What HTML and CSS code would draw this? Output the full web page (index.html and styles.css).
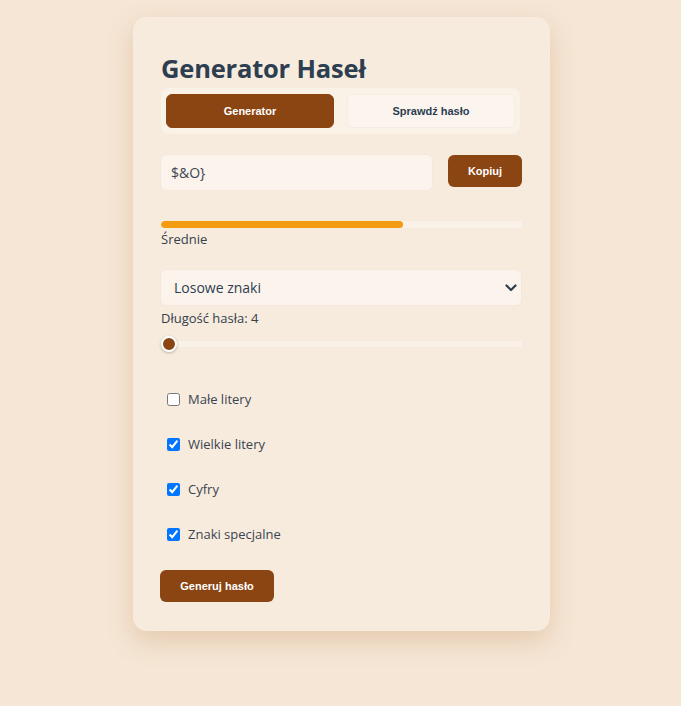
FILE: index.html
```html
<!DOCTYPE html>
<html lang="pl">
<head>
<meta charset="utf-8">
<title>Generator Haseł</title>
<link rel="stylesheet" href="styles.css">
</head>
<body>
<div class="page">
  <main class="card">
    <h1 class="title">Generator Haseł</h1>
    <div class="tabs">
      <button class="tab tab-active">Generator</button>
      <button class="tab">Sprawdź hasło</button>
    </div>
    <div class="output-row">
      <input class="output" type="text" value="$&amp;O}" readonly>
      <button class="btn btn-copy">Kopiuj</button>
    </div>
    <div class="strength">
      <div class="strength-track"><div class="strength-fill" style="width:67%"></div></div>
      <div class="strength-label">Średnie</div>
    </div>
    <div class="select-wrap">
      <select class="mode">
        <option>Losowe znaki</option>
      </select>
      <svg class="chevron" width="12" height="8" viewBox="0 0 12 8" aria-hidden="true"><path d="M1.5 1.5 L6 6 L10.5 1.5" fill="none" stroke="#2c3e50" stroke-width="2.2" stroke-linecap="round" stroke-linejoin="round"/></svg>
    </div>
    <div class="length-label">Długość hasła: 4</div>
    <input class="range" type="range" min="4" max="64" value="4">
    <div class="options">
      <label class="option"><input type="checkbox"> <span>Małe litery</span></label>
      <label class="option"><input type="checkbox" checked> <span>Wielkie litery</span></label>
      <label class="option"><input type="checkbox" checked> <span>Cyfry</span></label>
      <label class="option"><input type="checkbox" checked> <span>Znaki specjalne</span></label>
    </div>
    <div class="actions">
      <button class="btn btn-generate">Generuj hasło</button>
    </div>
  </main>
</div>
</body>
</html>
```
FILE: styles.css
```css
* { box-sizing: border-box; }
html, body { margin: 0; padding: 0; }
body {
  background: #f5e6d5;
  font-family: "Open Sans", "Noto Sans", sans-serif;
  color: #2c3e50;
}
.page {
  display: flex;
  justify-content: center;
  padding: 17px 0 40px 2px;
}
.card {
  width: 417px;
  background: #f7ebde;
  border-radius: 14px;
  padding: 28px 28px 29px 27px;
  box-shadow: 0 10px 26px rgba(185, 130, 75, 0.28);
  display: flex;
  flex-direction: column;
}
.title {
  margin: 5px 0 2px 1px;
  font-size: 25.5px;
  line-height: 36px;
  font-weight: 700;
  color: #2c3e50;
  letter-spacing: -0.2px;
}
.tabs {
  display: flex;
  gap: 13px;
  background: #faf1e7;
  border-radius: 8px;
  padding: 6px 5px 6px 5px;
  margin-left: 1px;
  width: 359px;
}
.tab {
  flex: 1;
  height: 34px;
  border: 1px solid #f7ece2;
  border-radius: 6px;
  background: #fcf5ef;
  font-family: "Liberation Sans", Arial, sans-serif;
  font-weight: 700;
  font-size: 11px;
  color: #2c3e50;
  cursor: pointer;
}
.tab-active {
  background: #8b4513;
  border-color: #8b4513;
  color: #fff;
}
.output-row {
  display: flex;
  align-items: flex-start;
  gap: 15px;
  margin-top: 20px;
}
.output {
  width: 273px;
  height: 37px;
  border: 1px solid #f4e8dc;
  border-radius: 6px;
  background: #fbf3ec;
  font-family: "Open Sans", "Noto Sans", sans-serif;
  font-size: 14px;
  color: #3c4650;
  padding: 0 10px;
  outline: none;
}
.btn {
  border: none;
  border-radius: 6px;
  background: #8b4513;
  color: #fff;
  font-family: "Liberation Sans", Arial, sans-serif;
  font-weight: 700;
  font-size: 11px;
  height: 32px;
  cursor: pointer;
}
.btn-copy {
  width: 74px;
  margin-top: 1px;
}
.strength {
  margin-top: 30px;
  margin-left: 1px;
}
.strength-track {
  height: 7px;
  border-radius: 4px;
  background: #faf1e8;
  overflow: hidden;
}
.strength-fill {
  height: 100%;
  background: #f39c12;
  border-radius: 4px;
}
.strength-label {
  font-size: 13px;
  line-height: 18px;
  margin-top: 2px;
  color: #34404c;
}
.select-wrap {
  position: relative;
  margin-top: 21px;
  width: 362px;
}
.mode {
  -webkit-appearance: none;
  appearance: none;
  display: block;
  width: 362px;
  height: 37px;
  border: 1px solid #f4e8dc;
  border-radius: 6px;
  background-color: #fbf3ec;
  font-family: "Open Sans", "Noto Sans", sans-serif;
  font-size: 14px;
  color: #2c3e50;
  padding: 0 13px;
  outline: none;
}
.chevron {
  position: absolute;
  right: 5px;
  top: 15px;
  pointer-events: none;
}
.length-label {
  font-size: 13px;
  line-height: 18px;
  margin: 3px 0 0 1px;
  color: #34404c;
}
.range {
  -webkit-appearance: none;
  appearance: none;
  width: 361px;
  height: 6px;
  margin: 14px 0 0 1px;
  background: #faf1e8;
  border-radius: 3px;
  outline: none;
}
.range::-webkit-slider-thumb {
  -webkit-appearance: none;
  appearance: none;
  width: 16px;
  height: 16px;
  border-radius: 50%;
  background: #8b4513;
  border: 2px solid #fff;
  box-shadow: 0 1px 3px rgba(0, 0, 0, 0.25);
  cursor: pointer;
}
.options {
  display: flex;
  flex-direction: column;
  gap: 20px;
  margin-top: 40px;
  padding-left: 3px;
}
.option {
  display: flex;
  align-items: center;
  gap: 4px;
  font-size: 13px;
  line-height: 25px;
  height: 25px;
  color: #3a4450;
  cursor: pointer;
}
.option input {
  margin: 0 4px 0 4px;
  width: 13px;
  height: 13px;
}
.actions {
  margin-top: 23px;
}
.btn-generate {
  width: 114px;
}
```
